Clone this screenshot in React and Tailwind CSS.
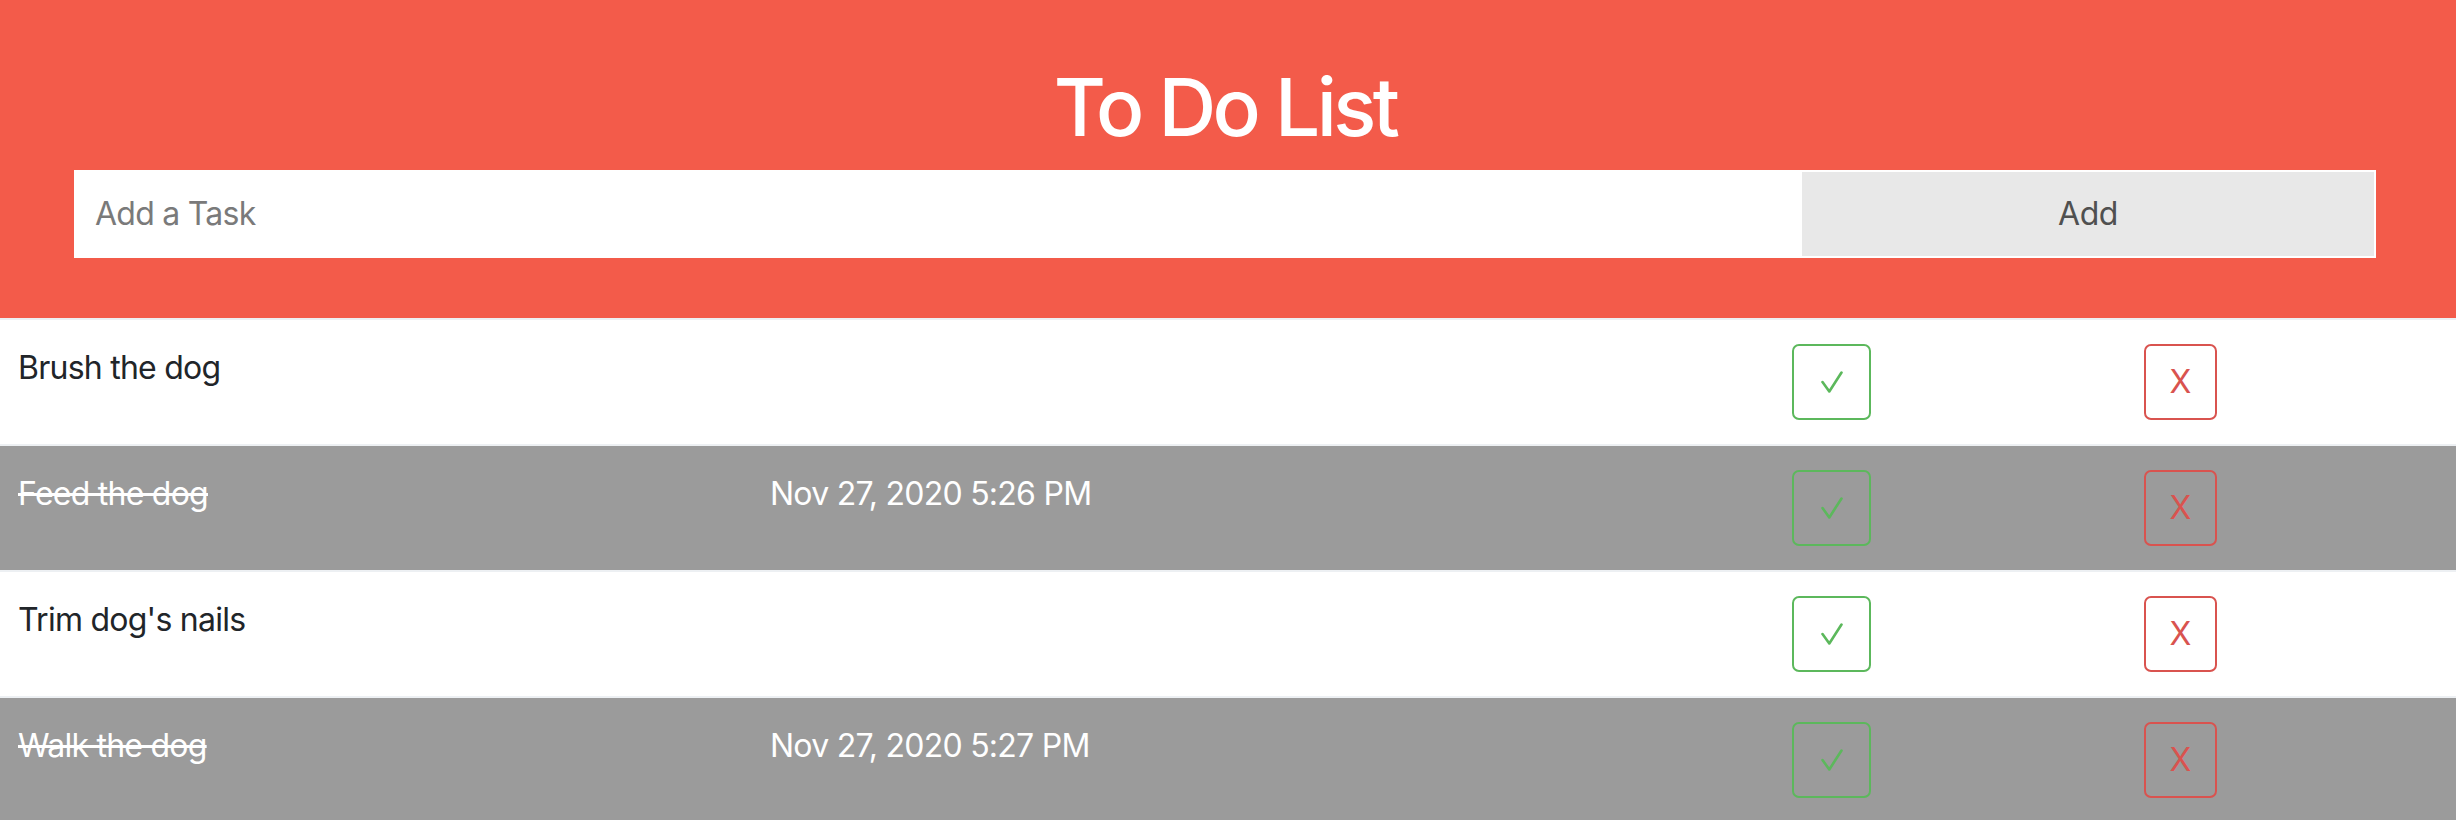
import React from "react";

const tasks = [
  { text: "Brush the dog", done: false, date: "" },
  { text: "Feed the dog", done: true, date: "Nov 27, 2020 5:26 PM" },
  { text: "Trim dog's nails", done: false, date: "" },
  { text: "Walk the dog", done: true, date: "Nov 27, 2020 5:27 PM" },
];

function Check() {
  return (
    <svg width="22" height="22" viewBox="0 0 22 22" fill="none">
      <path d="M1.5 11 L8.3 20.5 L20.5 1.5" stroke="#5cb85c" strokeWidth="2.6" strokeLinecap="round" strokeLinejoin="round" />
    </svg>
  );
}

function Row({ task }) {
  return (
    <div
      className={`flex items-start border-t-2 border-[#edf0f3] py-6 ${
        task.done ? "bg-[#9b9b9b]" : "bg-white"
      }`}
    >
      <div
        className={`w-[770px] shrink-0 pl-[18px] text-[32px] leading-[48px] tracking-[-0.75px] ${
          task.done ? "text-white line-through" : "text-[#212529]"
        }`}
      >
        {task.text}
      </div>
      <div className="w-[1022px] shrink-0 text-[32px] leading-[48px] tracking-[-0.75px] text-white">
        {task.date}
      </div>
      <div className="w-[352px] shrink-0">
        <button className="flex h-[76px] w-[79px] items-center justify-center rounded-[7px] border-2 border-[#5cb85c]">
          <Check />
        </button>
      </div>
      <div>
        <button className="flex h-[76px] w-[73px] items-center justify-center rounded-[7px] border-2 border-[#d9534f] text-[32px] text-[#d9534f]">
          X
        </button>
      </div>
    </div>
  );
}

export default function App() {
  return (
    <div className="min-h-screen bg-white font-['Inter',sans-serif]">
      <div className="flex flex-col items-center bg-[#f35b4a] pl-[74px] pr-[80px] pt-[67px] pb-[60px]">
        <h1 className="text-[80px] font-medium leading-[80px] tracking-[-3.6px] text-white">
          To Do List
        </h1>
        <div className="mt-[23px] flex h-[88px] w-full border-2 border-white bg-white">
          <input
            className="min-w-0 flex-1 bg-white pl-[19px] text-[32px] tracking-[-0.75px] text-[#212529] outline-none placeholder:text-[#7a7a7a]"
            placeholder="Add a Task"
          />
          <button className="w-[572px] bg-[#e8e8e8] text-[32px] tracking-[-0.5px] text-[#505050]">
            Add
          </button>
        </div>
      </div>
      {tasks.map((t) => (
        <Row key={t.text} task={t} />
      ))}
    </div>
  );
}
